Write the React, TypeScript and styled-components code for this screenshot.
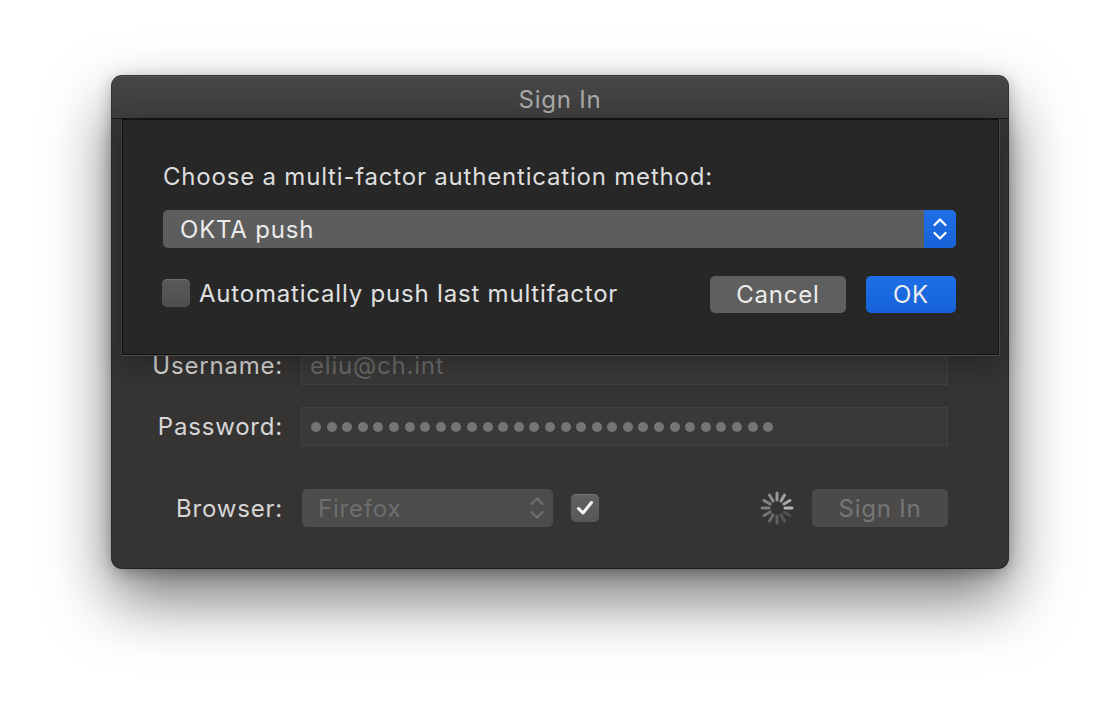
import styled, { createGlobalStyle } from "styled-components";
import React from "react";

const GlobalStyle = createGlobalStyle`
  html, body {
    margin: 0;
    padding: 0;
    background: #ffffff;
    font-family: Inter, "Noto Sans", "Liberation Sans", sans-serif;
    letter-spacing: 0.8px;
  }
  * {
    box-sizing: border-box;
  }
`;

const Page = styled.div`
  width: 1120px;
  height: 716px;
  padding: 76px 0 0 112px;
  overflow: hidden;
`;

const Window = styled.div`
  position: relative;
  width: 896px;
  height: 492px;
  border-radius: 10px;
  background: #353433;
  box-shadow: 0 0 0 1px rgba(0, 0, 0, 0.75), 0 30px 64px rgba(0, 0, 0, 0.55),
    0 4px 16px rgba(0, 0, 0, 0.3);
`;

const TitleBar = styled.div`
  height: 43px;
  display: flex;
  align-items: center;
  justify-content: center;
  padding-top: 3px;
  border-radius: 10px 10px 0 0;
  background: linear-gradient(#474747, #3c3c3c);
  border-top: 1px solid #555;
  border-bottom: 1px solid #161616;
  color: #a8a8a8;
  font-size: 24px;
`;

const Content = styled.div`
  display: grid;
  grid-template-columns: 131px 647px;
  column-gap: 18px;
  row-gap: 22px;
  padding: 227px 0 0 40px;
`;

const Label = styled.div`
  text-align: right;
  align-self: center;
  color: #d6d6d6;
  font-size: 24px;
`;

const Field = styled.div`
  height: 39px;
  display: flex;
  align-items: center;
  padding-left: 8px;
  background: #3a3938;
  border: 1px solid #424140;
  color: #6a6a6a;
  font-size: 24px;
`;

const Dots = styled.div`
  display: flex;
  gap: 5.6px;
  padding-left: 1px;
`;

const Dot = styled.span`
  width: 10px;
  height: 10px;
  border-radius: 50%;
  background: #757575;
`;

const BrowserRow = styled.div`
  display: flex;
  align-items: center;
  height: 38px;
  margin-top: 21px;
`;

const BrowserLabel = styled(Label)`
  margin-top: 21px;
`;

const Popup = styled.div`
  width: 251px;
  height: 38px;
  margin-left: 1px;
  display: flex;
  align-items: center;
  justify-content: space-between;
  padding: 0 8px 0 16px;
  border-radius: 5px;
  background: #4d4c4b;
  color: #6e6e6e;
  font-size: 24px;
`;

const CheckBox = styled.div<{ $checked?: boolean }>`
  width: 28px;
  height: 28px;
  flex: none;
  display: flex;
  align-items: center;
  justify-content: center;
  border-radius: 5px;
  background: ${(p) =>
    p.$checked ? "linear-gradient(#626262, #575757)" : "linear-gradient(#5a5a5a, #4e4e4e)"};
  box-shadow: inset 0 1px 0 rgba(255, 255, 255, 0.12);
`;

const BrowserCheck = styled(CheckBox)`
  margin-left: 18px;
`;

const Spacer = styled.div`
  flex: 1;
`;

const Button = styled.div<{ $kind: "plain" | "primary" | "disabled"; $w: number }>`
  width: ${(p) => p.$w}px;
  height: 37px;
  flex: none;
  display: flex;
  align-items: center;
  justify-content: center;
  border-radius: 5px;
  font-size: 24px;
  background: ${(p) =>
    p.$kind === "primary"
      ? "linear-gradient(#1f6fe6, #1562d8)"
      : p.$kind === "plain"
      ? "#5f5f5f"
      : "#4b4a49"};
  color: ${(p) => (p.$kind === "disabled" ? "#767676" : "#ececec")};
`;

const SignInButton = styled(Button)`
  height: 38px;
  margin-left: 18px;
`;

const Sheet = styled.div`
  position: absolute;
  left: 10px;
  top: 43px;
  width: 877px;
  height: 236px;
  padding: 43px 42px 0 40px;
  background: #272727;
  border: 1px solid #121212;
  box-shadow: 0 1px 0 #4a4a4a, 1px 0 0 #4a4a4a, -1px 0 0 #3c3c3c,
    0 10px 24px rgba(0, 0, 0, 0.25);
`;

const Prompt = styled.div`
  height: 28px;
  line-height: 28px;
  color: #dedede;
  font-size: 24px;
`;

const Select = styled.div`
  margin-top: 19px;
  height: 38px;
  display: flex;
  align-items: center;
  border-radius: 5px;
  background: #5d5d5d;
  color: #ebebeb;
  font-size: 24px;
  overflow: hidden;
`;

const SelectText = styled.div`
  flex: 1;
  padding-left: 17px;
`;

const Stepper = styled.div`
  width: 32px;
  height: 100%;
  display: flex;
  align-items: center;
  justify-content: center;
  background: linear-gradient(#1f6fe6, #1763d8);
`;

const ActionRow = styled.div`
  margin-top: 28px;
  height: 37px;
  display: flex;
  align-items: center;
  gap: 20px;
`;

const CheckLabel = styled.label`
  display: flex;
  align-items: center;
  gap: 9px;
  margin-left: -1px;
  margin-top: -3px;
  color: #e0e0e0;
  font-size: 24px;
`;

const Chevrons = ({ color }: { color: string }) => (
  <svg width="16" height="26" viewBox="0 0 16 26">
    <path d="M2.5 9 L8 3.5 L13.5 9" fill="none" stroke={color} strokeWidth="2.2" strokeLinecap="round" strokeLinejoin="round" />
    <path d="M2.5 17 L8 22.5 L13.5 17" fill="none" stroke={color} strokeWidth="2.2" strokeLinecap="round" strokeLinejoin="round" />
  </svg>
);

const Check = () => (
  <svg width="20" height="20" viewBox="0 0 20 20">
    <path d="M3.5 10.5 L8 15 L16.5 4.5" fill="none" stroke="#f4f4f4" strokeWidth="3" strokeLinecap="round" strokeLinejoin="round" />
  </svg>
);

const Spinner = () => {
  const spokes = Array.from({ length: 12 }, (_, i) => i);
  return (
    <svg width="34" height="34" viewBox="-17 -17 34 34">
      {spokes.map((i) => {
        const a = (i * 30 * Math.PI) / 180;
        // brightest spoke at 3 o'clock, the ones behind it fade
        const behind = (3 - i + 12) % 12;
        const shade = 178 - behind * 9;
        return (
          <line
            key={i}
            x1={Math.sin(a) * 8}
            y1={-Math.cos(a) * 8}
            x2={Math.sin(a) * 15}
            y2={-Math.cos(a) * 15}
            stroke={`rgb(${shade},${shade},${shade})`}
            strokeWidth="3"
            strokeLinecap="round"
          />
        );
      })}
    </svg>
  );
};

export default function App() {
  const dots = Array.from({ length: 30 }, (_, i) => i);
  return (
    <>
      <GlobalStyle />
      <Page>
        <Window>
          <TitleBar>Sign In</TitleBar>
          <Content>
            <Label>Username:</Label>
            <Field>eliu@ch.int</Field>
            <Label>Password:</Label>
            <Field>
              <Dots>
                {dots.map((i) => (
                  <Dot key={i} />
                ))}
              </Dots>
            </Field>
            <BrowserLabel>Browser:</BrowserLabel>
            <BrowserRow>
              <Popup>
                Firefox
                <Chevrons color="#6f6f6f" />
              </Popup>
              <BrowserCheck $checked>
                <Check />
              </BrowserCheck>
              <Spacer />
              <Spinner />
              <SignInButton $kind="disabled" $w={136}>
                Sign In
              </SignInButton>
            </BrowserRow>
          </Content>

          <Sheet>
            <Prompt>Choose a multi-factor authentication method:</Prompt>
            <Select>
              <SelectText>OKTA push</SelectText>
              <Stepper>
                <Chevrons color="#ffffff" />
              </Stepper>
            </Select>
            <ActionRow>
              <CheckLabel>
                <CheckBox />
                Automatically push last multifactor
              </CheckLabel>
              <Spacer />
              <Button $kind="plain" $w={136}>
                Cancel
              </Button>
              <Button $kind="primary" $w={90}>
                OK
              </Button>
            </ActionRow>
          </Sheet>
        </Window>
      </Page>
    </>
  );
}
